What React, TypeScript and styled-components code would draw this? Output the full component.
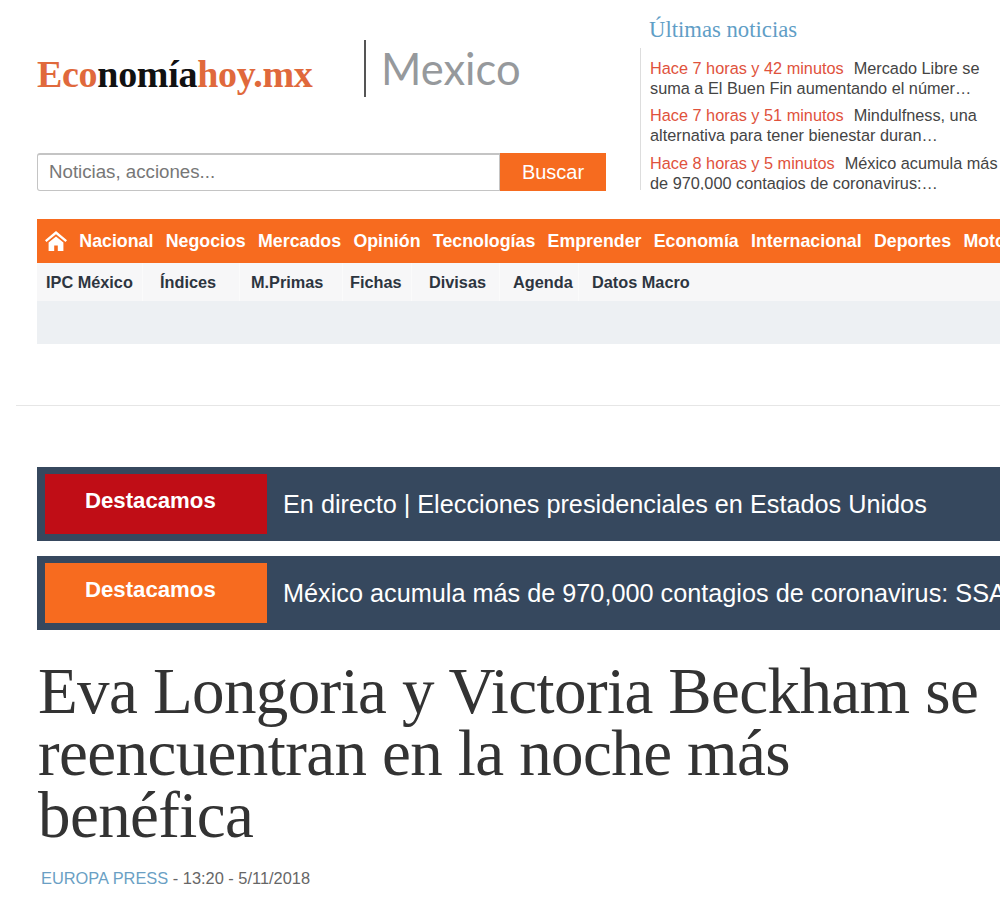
import styled, { createGlobalStyle } from "styled-components";

const GlobalStyle = createGlobalStyle`
  html, body {
    margin: 0;
    padding: 0;
    background: #fff;
    overflow: hidden;
  }
  body {
    font-family: "Liberation Sans", Arial, sans-serif;
  }
`;

const Page = styled.div`
  width: 1000px;
  height: 899px;
  overflow: hidden;
`;

const Header = styled.header`
  display: flex;
  height: 219px;
  padding-left: 37px;
`;

const BrandColumn = styled.div`
  width: 569px;
  flex: none;
  padding-top: 40px;
`;

const BrandRow = styled.div`
  display: flex;
  align-items: flex-start;
  height: 113px;
`;

const Logo = styled.div`
  width: 327px;
  flex: none;
  padding-top: 11px;
  font-family: "Liberation Serif", serif;
  font-weight: 700;
  font-size: 38px;
  line-height: 46px;
  letter-spacing: -0.3px;
  color: #e0693c;

  b {
    color: #111;
  }
`;

const Edition = styled.div`
  border-left: 2px solid #555;
  height: 57px;
  padding-left: 15px;
  font-family: "Lato", sans-serif;
  font-size: 43.5px;
  line-height: 56px;
  color: #96999c;
`;

const SearchForm = styled.form`
  display: flex;
  height: 38px;
`;

const SearchInput = styled.div`
  flex: 1;
  box-sizing: border-box;
  padding-left: 11px;
  border: 1px solid #c4c4c4;
  border-top-width: 2px;
  border-radius: 3px 0 0 3px;
  font-size: 18.7px;
  line-height: 34px;
  color: #777;
`;

const SearchButton = styled.button`
  width: 106px;
  border: 0;
  padding: 0;
  background: #f66b1f;
  color: #fff;
  font-family: inherit;
  font-size: 20px;
`;

const LatestColumn = styled.aside`
  margin-left: 34px;
  width: 360px;
  flex: none;
  padding-top: 17px;
`;

const LatestTitle = styled.h2`
  margin: 0 0 5px 9px;
  font-family: "Liberation Serif", serif;
  font-weight: 400;
  font-size: 22.7px;
  line-height: 26px;
  color: #5f9ec6;
`;

const LatestList = styled.div`
  height: 142px;
  overflow: hidden;
  box-sizing: border-box;
  padding: 10px 0 0 9px;
  border-left: 1px solid #ddd;
`;

const LatestItem = styled.p`
  margin: 0 0 7.4px;
  font-size: 16.3px;
  line-height: 20px;
  color: #444;
`;

const Ago = styled.span`
  color: #e0523c;
  margin-right: 10px;
`;

const Nav = styled.nav`
  margin-left: 37px;
`;

const MainNav = styled.div`
  display: flex;
  align-items: center;
  gap: 12.3px;
  height: 44px;
  padding-left: 8px;
  background: #f76b1f;
  white-space: nowrap;

  svg {
    flex: none;
  }
`;

const MainLink = styled.a`
  flex: none;
  color: #fff;
  font-size: 17.8px;
  font-weight: 700;
`;

const SubNav = styled.div`
  display: flex;
  height: 38px;
  background: #f7f7f8;
`;

const SubLink = styled.a<{ $width: number; $pad: number }>`
  width: ${(p) => p.$width}px;
  flex: none;
  box-sizing: border-box;
  padding: 1px 0 0 ${(p) => p.$pad}px;
  border-right: 1px solid #fbfbfb;
  font-size: 16.3px;
  font-weight: 700;
  line-height: 37px;
  color: #2d3540;
  white-space: nowrap;

  &:last-child {
    border-right: 0;
  }
`;

const NavStrip = styled.div`
  height: 43px;
  background: #edf0f3;
`;

const Rule = styled.hr`
  margin: 61px 0 61px 16px;
  border: 0;
  border-top: 1px solid #e6e6e6;
`;

const Content = styled.main`
  padding-left: 37px;
`;

const Banner = styled.div`
  display: flex;
  align-items: center;
  gap: 16px;
  height: 74px;
  margin-bottom: 15px;
  padding-left: 8px;
  background: #36485e;
  white-space: nowrap;
`;

const BannerLabel = styled.div<{ $tone: string }>`
  width: 222px;
  height: 60px;
  flex: none;
  padding: 14px 0 0 40px;
  box-sizing: border-box;
  background: ${(p) => p.$tone};
  color: #fff;
  font-size: 22.2px;
  font-weight: 700;
  line-height: 25px;
`;

const BannerText = styled.div`
  color: #fff;
  font-size: 25.25px;
  line-height: 28px;
`;

const Headline = styled.h1`
  margin: 0 0 0 1px;
  padding-top: 15px;
  font-family: "Liberation Serif", serif;
  font-weight: 400;
  font-size: 65px;
  letter-spacing: -0.6px;
  line-height: 62px;
  color: #333;
`;

const Byline = styled.p`
  margin: 22px 0 0 4px;
  font-size: 16.4px;
  line-height: 20px;
  color: #666;
`;

const Agency = styled.span`
  color: #6a9fc4;
`;

const mainLinks = [
  "Nacional",
  "Negocios",
  "Mercados",
  "Opinión",
  "Tecnologías",
  "Emprender",
  "Economía",
  "Internacional",
  "Deportes",
  "Motor",
];

const subLinks: [string, number, number][] = [
  ["IPC México", 106, 9],
  ["Índices", 97, 17],
  ["M.Primas", 103, 11],
  ["Fichas", 69, 7],
  ["Divisas", 88, 17],
  ["Agenda", 79, 13],
  ["Datos Macro", 130, 13],
];

const news = [
  ["Hace 7 horas y 42 minutos", "Mercado Libre se suma a El Buen Fin aumentando el númer…"],
  ["Hace 7 horas y 51 minutos", "Mindulfness, una alternativa para tener bienestar duran…"],
  ["Hace 8 horas y 5 minutos", "México acumula más de 970,000 contagios de coronavirus:…"],
];

const HomeIcon = () => (
  <svg width="22" height="20" viewBox="0 0 22 20" fill="#fff">
    <path d="M11 0 0 9.2l1.5 1.9L11 3.3l9.5 7.8 1.5-1.9z" />
    <path d="M11 5.4 3.6 11.5V20h5.6v-5.4h3.6V20h5.6v-8.5z" />
  </svg>
);

export default function App() {
  return (
    <Page>
      <GlobalStyle />
      <Header>
        <BrandColumn>
          <BrandRow>
            <Logo>
              Eco<b>nomía</b>hoy.mx
            </Logo>
            <Edition>Mexico</Edition>
          </BrandRow>
          <SearchForm>
            <SearchInput>Noticias, acciones...</SearchInput>
            <SearchButton type="button">Buscar</SearchButton>
          </SearchForm>
        </BrandColumn>
        <LatestColumn>
          <LatestTitle>Últimas noticias</LatestTitle>
          <LatestList>
            {news.map(([ago, text]) => (
              <LatestItem key={ago}>
                <Ago>{ago}</Ago>
                {text}
              </LatestItem>
            ))}
          </LatestList>
        </LatestColumn>
      </Header>
      <Nav>
        <MainNav>
          <HomeIcon />
          {mainLinks.map((l) => (
            <MainLink key={l}>{l}</MainLink>
          ))}
        </MainNav>
        <SubNav>
          {subLinks.map(([l, w, pad]) => (
            <SubLink key={l} $width={w} $pad={pad}>
              {l}
            </SubLink>
          ))}
        </SubNav>
        <NavStrip />
      </Nav>
      <Rule />
      <Content>
        <Banner>
          <BannerLabel $tone="#c00d16">Destacamos</BannerLabel>
          <BannerText>En directo | Elecciones presidenciales en Estados Unidos</BannerText>
        </Banner>
        <Banner>
          <BannerLabel $tone="#f76b1f">Destacamos</BannerLabel>
          <BannerText>México acumula más de 970,000 contagios de coronavirus: SSA</BannerText>
        </Banner>
        <Headline>Eva Longoria y Victoria Beckham se reencuentran en la noche más benéfica</Headline>
        <Byline>
          <Agency>EUROPA PRESS</Agency> - 13:20 - 5/11/2018
        </Byline>
      </Content>
    </Page>
  );
}
